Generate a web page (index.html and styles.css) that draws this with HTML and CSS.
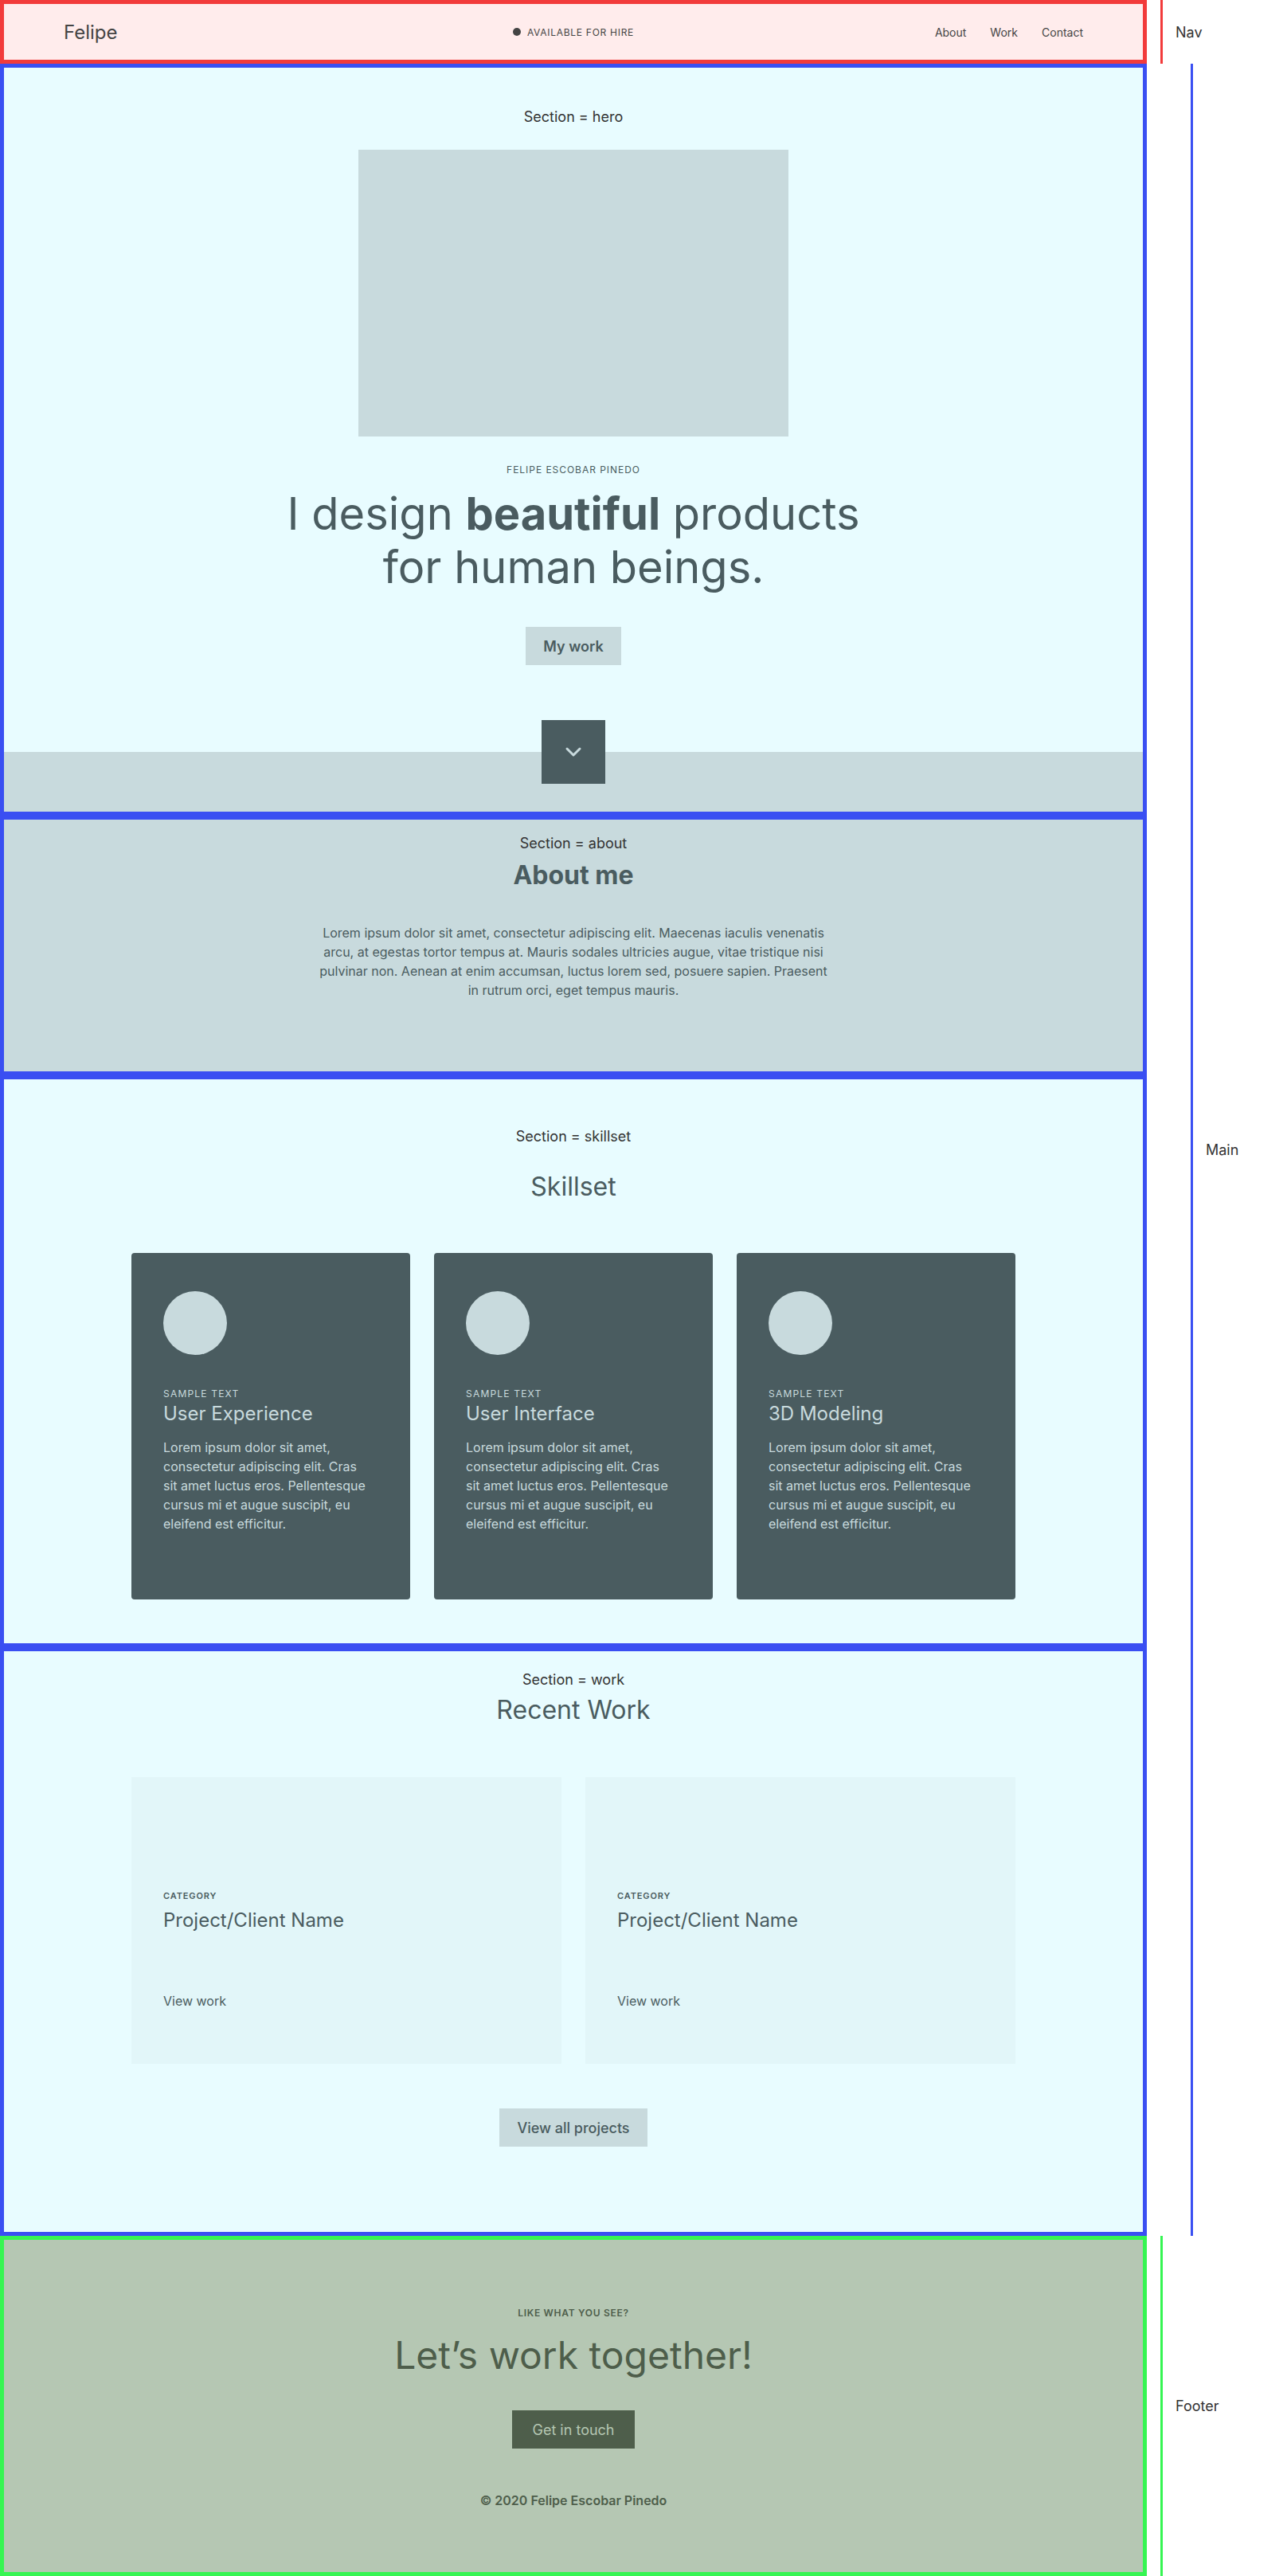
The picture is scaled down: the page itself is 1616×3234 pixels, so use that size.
FILE: index.html
```html
<!DOCTYPE html>
<html lang="en">
<head>
    <meta charset="UTF-8">
    <meta name="viewport" content="width=device-width, initial-scale=1.0">
    <title>Felipe Escobar Pinedo</title>
    <link rel="stylesheet" href="styles.css">
</head>
<body>
    <div class="region">
        <header class="box box-red nav">
            <a class="logo" href="#">Felipe</a>
            <div class="status"><span class="dot"></span>Available for hire</div>
            <nav class="links">
                <a href="#about">About</a>
                <a href="#work">Work</a>
                <a href="#contact">Contact</a>
            </nav>
        </header>
        <div class="tag tag-red"><span>Nav</span></div>
    </div>

    <div class="region">
        <main class="main">
            <section class="box box-blue hero">
                <p class="section-name">Section = hero</p>
                <div class="hero-image"></div>
                <p class="eyebrow">Felipe Escobar Pinedo</p>
                <h1 class="hero-title">I design <b>beautiful</b> products<br>for human beings.</h1>
                <a class="btn btn-light hero-btn" href="#work">My work</a>
                <a class="scroll-down" href="#about">
                    <svg width="22" height="14" viewBox="0 0 22 14"><polyline points="3,3 11,11 19,3" fill="none" stroke="#c8dadd" stroke-width="3" stroke-linecap="round" stroke-linejoin="round"/></svg>
                </a>
            </section>

            <section class="box box-blue about" id="about">
                <p class="section-name">Section = about</p>
                <h2 class="about-title">About me</h2>
                <p class="about-text">Lorem ipsum dolor sit amet, consectetur adipiscing elit. Maecenas iaculis venenatis arcu, at egestas tortor tempus at. Mauris sodales ultricies augue, vitae tristique nisi pulvinar non. Aenean at enim accumsan, luctus lorem sed, posuere sapien. Praesent in rutrum orci, eget tempus mauris.</p>
            </section>

            <section class="box box-blue skillset">
                <p class="section-name">Section = skillset</p>
                <h2 class="heading">Skillset</h2>
                <div class="skills">
                    <div class="skill">
                        <div class="skill-icon"></div>
                        <p class="skill-label">Sample text</p>
                        <h3 class="skill-title">User Experience</h3>
                        <p class="skill-text">Lorem ipsum dolor sit amet, consectetur adipiscing elit. Cras sit amet luctus eros. Pellentesque cursus mi et augue suscipit, eu eleifend est efficitur.</p>
                    </div>
                    <div class="skill">
                        <div class="skill-icon"></div>
                        <p class="skill-label">Sample text</p>
                        <h3 class="skill-title">User Interface</h3>
                        <p class="skill-text">Lorem ipsum dolor sit amet, consectetur adipiscing elit. Cras sit amet luctus eros. Pellentesque cursus mi et augue suscipit, eu eleifend est efficitur.</p>
                    </div>
                    <div class="skill">
                        <div class="skill-icon"></div>
                        <p class="skill-label">Sample text</p>
                        <h3 class="skill-title">3D Modeling</h3>
                        <p class="skill-text">Lorem ipsum dolor sit amet, consectetur adipiscing elit. Cras sit amet luctus eros. Pellentesque cursus mi et augue suscipit, eu eleifend est efficitur.</p>
                    </div>
                </div>
            </section>

            <section class="box box-blue work" id="work">
                <p class="section-name">Section = work</p>
                <h2 class="heading work-heading">Recent Work</h2>
                <div class="projects">
                    <div class="project">
                        <p class="project-cat">Category</p>
                        <h3 class="project-name">Project/Client Name</h3>
                        <a class="project-link" href="#">View work</a>
                    </div>
                    <div class="project">
                        <p class="project-cat">Category</p>
                        <h3 class="project-name">Project/Client Name</h3>
                        <a class="project-link" href="#">View work</a>
                    </div>
                </div>
                <a class="btn btn-light" href="#">View all projects</a>
            </section>
        </main>
        <div class="tag tag-blue"><span>Main</span></div>
    </div>

    <div class="region">
        <footer class="box box-green footer" id="contact">
            <p class="footer-eyebrow">Like what you see?</p>
            <h2 class="footer-title">Let’s work together!</h2>
            <a class="btn btn-dark" href="#">Get in touch</a>
            <p class="copyright">© 2020 Felipe Escobar Pinedo</p>
        </footer>
        <div class="tag tag-green"><span>Footer</span></div>
    </div>
</body>
</html>
```

FILE: styles.css
```css
* {
    box-sizing: border-box;
}
body {
    margin: 0;
    font-family: Inter, "Noto Sans", Arial, sans-serif;
    color: #4a5c60;
    background: #fff;
}
p, h1, h2, h3 {
    margin: 0;
}
a {
    text-decoration: none;
    color: inherit;
}

/* page regions with the outline tags on the right */
.region {
    display: grid;
    grid-template-columns: 1440px 1fr;
}
.box {
    border: 5px solid;
}
.box-red {
    border-color: #f23b3b;
}
.box-blue {
    border-color: #3a4ff2;
}
.box-green {
    border-color: #36f552;
}
.tag {
    display: flex;
    align-items: center;
    margin-left: 17px;
    padding-left: 16px;
    border-left: 3px solid;
    font-size: 18px;
    color: #333;
}
.tag-red {
    border-color: #f23b3b;
}
.tag-blue {
    margin-left: 55px;
    border-color: #3a4ff2;
}
.tag-green {
    border-color: #36f552;
}

/* nav */
.nav {
    height: 80px;
    padding: 0 75px;
    background: #ffecec;
    display: grid;
    grid-template-columns: 1fr auto 1fr;
    align-items: center;
    color: #444;
}
.logo {
    font-size: 24px;
}
.status {
    display: flex;
    align-items: center;
    gap: 8px;
    font-size: 12px;
    letter-spacing: 0.06em;
    text-transform: uppercase;
}
.dot {
    width: 10px;
    height: 10px;
    border-radius: 50%;
    background: #444;
}
.links {
    display: flex;
    justify-content: flex-end;
    gap: 30px;
    font-size: 14px;
}

/* shared */
.main {
    display: flex;
    flex-direction: column;
}
.section-name {
    font-size: 18px;
    line-height: 24px;
    color: #333;
}
section {
    text-align: center;
    background: #e8fcff;
}
.heading {
    font-size: 32px;
    font-weight: 400;
    line-height: 40px;
}
.btn {
    display: inline-flex;
    align-items: center;
    height: 48px;
    padding: 0 22px;
    font-size: 18px;
    font-weight: 500;
}
.btn-light {
    background: #c8dadd;
    color: #4a5c60;
}
.btn-dark {
    background: #4e5e4b;
    color: #b5c7b3;
    font-weight: 400;
    padding: 0 25px;
}

/* hero */
.hero {
    padding: 50px 0 35px;
    background: linear-gradient(to bottom, #e8fcff calc(100% - 75px), #c8dadd calc(100% - 75px));
    display: flex;
    flex-direction: column;
    align-items: center;
}
.hero-image {
    width: 540px;
    height: 360px;
    margin-top: 29px;
    background: #c8dadd;
}
.eyebrow {
    margin-top: 34px;
    font-size: 12px;
    line-height: 16px;
    letter-spacing: 0.08em;
    text-transform: uppercase;
}
.hero-title {
    margin-top: 14px;
    font-size: 56px;
    line-height: 67px;
    font-weight: 400;
}
.hero-title b {
    font-weight: 700;
}
.hero-btn {
    margin-top: 41px;
    font-weight: 600;
}
.scroll-down {
    margin-top: 69px;
    width: 80px;
    height: 80px;
    background: #4a5c60;
    display: flex;
    align-items: center;
    justify-content: center;
}

/* about */
.about {
    padding: 18px 0 90px;
    background: #c8dadd;
}
.about-title {
    margin-top: 8px;
    font-size: 32px;
    line-height: 40px;
    font-weight: 700;
}
.about-text {
    max-width: 640px;
    margin: 40px auto 0;
    font-size: 16px;
    line-height: 24px;
}

/* skillset */
.skillset {
    padding: 60px 0 55px;
}
.skillset .heading {
    margin-top: 31px;
}
.skills {
    margin-top: 63px;
    display: flex;
    justify-content: center;
    gap: 30px;
}
.skill {
    width: 350px;
    height: 435px;
    padding: 48px 40px;
    border-radius: 4px;
    background: #4a5c60;
    color: #c8dadd;
    text-align: left;
}
.skill-icon {
    width: 80px;
    height: 80px;
    border-radius: 50%;
    background: #c8dadd;
}
.skill-label {
    margin-top: 41px;
    font-size: 12px;
    line-height: 16px;
    letter-spacing: 0.1em;
    text-transform: uppercase;
}
.skill-title {
    margin-top: 2px;
    font-size: 24px;
    line-height: 30px;
    font-weight: 400;
}
.skill-text {
    max-width: 258px;
    margin-top: 15px;
    font-size: 16px;
    line-height: 24px;
}

/* work */
.work {
    padding: 24px 0 107px;
}
.work-heading {
    margin-top: 6px;
}
.projects {
    margin: 64px 0 56px;
    display: flex;
    justify-content: center;
    gap: 30px;
}
.project {
    width: 540px;
    height: 360px;
    padding: 142px 40px 0;
    background: #e2f6f9;
    text-align: left;
}
.project-cat {
    font-size: 11px;
    line-height: 14px;
    font-weight: 600;
    letter-spacing: 0.08em;
    text-transform: uppercase;
}
.project-name {
    margin-top: 9px;
    font-size: 24px;
    line-height: 30px;
    font-weight: 400;
}
.project-link {
    display: block;
    margin-top: 74px;
    font-size: 16px;
    line-height: 24px;
}

/* footer */
.footer {
    padding: 84px 0 80px;
    background: #b5c7b3;
    color: #4e5e4b;
    text-align: center;
}
.footer-eyebrow {
    font-size: 12px;
    line-height: 16px;
    font-weight: 600;
    letter-spacing: 0.06em;
    text-transform: uppercase;
}
.footer-title {
    margin: 16px 0 40px;
    font-size: 48px;
    line-height: 58px;
    font-weight: 400;
}
.copyright {
    margin-top: 55px;
    font-size: 16px;
    line-height: 20px;
    font-weight: 600;
}
```
